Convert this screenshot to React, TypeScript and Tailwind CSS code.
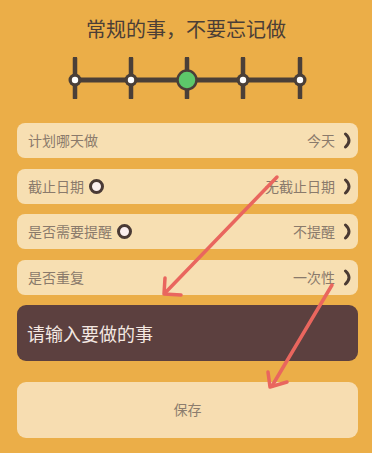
import React from "react";

const FONT = { fontFamily: '"Noto Sans CJK SC", "Noto Sans", sans-serif' };

function Chevron() {
  return (
    <svg width="10" height="17" viewBox="0 0 10 17" className="shrink-0">
      <path d="M2.5 2 Q9.5 8.5 2.5 15" fill="none" stroke="#4a3a33" strokeWidth="3" strokeLinecap="round" />
    </svg>
  );
}

function Radio() {
  return <span className="ml-[5px] inline-block h-[15px] w-[15px] rounded-full border-[3.5px] border-[#4a3a35] bg-[#fbefef]" />;
}

function Timeline() {
  const xs = [75, 131, 187, 243, 300];
  return (
    <svg width="372" height="42" viewBox="0 56 372 42" className="block">
      <line x1="75" y1="79" x2="300" y2="79" stroke="#4a3f38" strokeWidth="5" />
      {xs.map((x) => (
        <line key={x} x1={x} y1="57.5" x2={x} y2="97" stroke="#4a3f38" strokeWidth="4.5" strokeLinecap="round" />
      ))}
      {xs.map((x, i) =>
        i === 2 ? (
          <circle key={"c" + x} cx={x} cy="79" r="9.5" fill="#5dc86a" stroke="#4a3f38" strokeWidth="2.5" />
        ) : (
          <g key={"c" + x}>
            <circle cx={x} cy="79" r="6.5" fill="#4a3f38" />
            <circle cx={x} cy="79" r="3.2" fill="#ffffff" />
          </g>
        ),
      )}
    </svg>
  );
}

const rows = [
  { label: "计划哪天做", value: "今天", radio: false },
  { label: "截止日期", value: "无截止日期", radio: true },
  { label: "是否需要提醒", value: "不提醒", radio: true },
  { label: "是否重复", value: "一次性", radio: false },
];

export default function App() {
  return (
    <div className="relative h-[453px] w-[372px] overflow-hidden bg-[#ebae48]" style={FONT}>
      <div className="flex flex-col items-center pt-[14px]">
        <h1 className="text-[20px] leading-[30px] text-[#4b3e36]">常规的事，不要忘记做</h1>
      </div>
      <div className="mt-[13px]">
        <Timeline />
      </div>
      <div className="ml-[17px] mt-[24px] flex w-[341px] flex-col gap-[10.5px]">
        {rows.map((r) => (
          <div key={r.label} className="flex h-[35px] items-center justify-between rounded-[8px] bg-[#f7dfb2] pl-[11px] pr-[5px]">
            <div className="flex items-center text-[14px] text-[#8a7a6b]">
              <span>{r.label}</span>
              {r.radio && <Radio />}
            </div>
            <div className="flex items-center gap-[8px] text-[14px] text-[#8a7a6b]">
              <span>{r.value}</span>
              <Chevron />
            </div>
          </div>
        ))}
        <div className="flex h-[56px] items-center rounded-[9px] bg-[#5c403f] pl-[10px] text-[18px] text-[#f3e8e2]">
          请输入要做的事
        </div>
        <button
          type="button"
          className="mt-[10px] flex h-[56px] items-center justify-center rounded-[9px] bg-[#f7ddb1] text-[14px] text-[#8c7d6e]"
        >
          保存
        </button>
      </div>
      <svg className="pointer-events-none absolute left-0 top-0" width="372" height="453" viewBox="0 0 372 453">
        <g fill="none" stroke="#e9665e" strokeWidth="3.5" strokeLinecap="round" strokeLinejoin="round">
          <path d="M277 177 L165 293" />
          <path d="M165 278 L164 294 L181 295" />
          <path d="M332 285 L272 386" />
          <path d="M268 372 L270 387 L287 382" />
        </g>
      </svg>
    </div>
  );
}
